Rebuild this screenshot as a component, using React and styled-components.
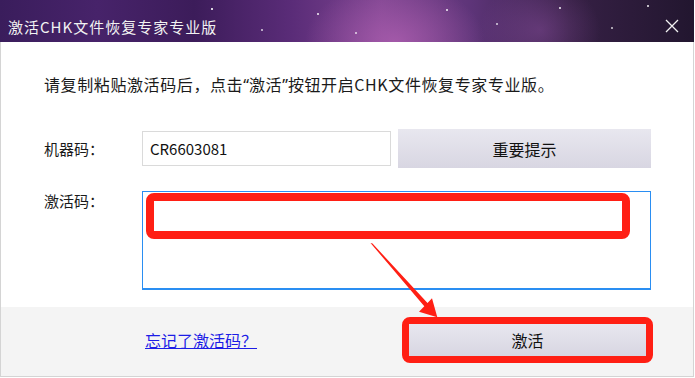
import styled, { createGlobalStyle } from 'styled-components';

const FONT = '"Noto Sans CJK SC", "Noto Sans", sans-serif';
const RED = '#ff1f14';

const GlobalStyle = createGlobalStyle`
  html, body {
    margin: 0;
    padding: 0;
    background: #ffffff;
  }
  * {
    box-sizing: border-box;
  }
`;

export default function App() {
  return (
    <>
      <GlobalStyle />
      <Window>
        <TitleBar>
          <Title>激活CHK文件恢复专家专业版</Title>
          <Close viewBox="0 0 14 14">
            <path d="M1 1 L13 13 M13 1 L1 13" stroke="#f2f2f2" strokeWidth="1.3" fill="none" />
          </Close>
        </TitleBar>

        <Body>
          <Hint>
            请复制粘贴激活码后，点击<Quote>“</Quote>激活<Quote>”</Quote>按钮开启CHK文件恢复专家专业版。
          </Hint>

          <Row $align="center" $top={32}>
            <Label>机器码：</Label>
            <CodeInput readOnly defaultValue="CR6603081" />
            <GrayButton $w={253} $h={39} $ml={7}>重要提示</GrayButton>
          </Row>

          <Row $align="flex-start" $top={23}>
            <Label>激活码：</Label>
            <CodeArea>
              <MarkBox />
            </CodeArea>
          </Row>
        </Body>

        <Footer>
          <ForgotLink href="#">忘记了激活码？</ForgotLink>
          <Highlight>
            <GrayButton $w={237} $h={32}>激活</GrayButton>
          </Highlight>
        </Footer>

        <Arrow viewBox="0 0 695 378">
          <polygon
            points="370.5,243 372.5,243.5 427.5,303 432,298.3 437.3,317.3 419,311.7 424.3,306.3"
            fill={RED}
          />
        </Arrow>
      </Window>
    </>
  );
}

const Window = styled.div`
  position: relative;
  display: flex;
  flex-direction: column;
  width: 694px;
  height: 377px;
  border-left: 1px solid #d4d4d4;
  border-right: 1px solid #d4d4d4;
  border-bottom: 1px solid #d4d4d4;
  font-family: ${FONT};
  color: #1a1a1a;
`;

const TitleBar = styled.div`
  display: flex;
  align-items: center;
  justify-content: space-between;
  height: 42px;
  margin-left: -1px;
  margin-right: -1px;
  padding: 12px 15px 0 8px;
  background:
    radial-gradient(circle at 212px 9px, rgba(255,255,255,0.8) 0 0.8px, transparent 1.3px),
    radial-gradient(circle at 262px 30px, rgba(255,255,255,0.6) 0 0.7px, transparent 1.2px),
    radial-gradient(circle at 318px 14px, rgba(255,255,255,0.7) 0 0.8px, transparent 1.3px),
    radial-gradient(circle at 356px 33px, rgba(255,255,255,0.6) 0 0.7px, transparent 1.2px),
    radial-gradient(circle at 447px 10px, rgba(255,255,255,0.7) 0 0.8px, transparent 1.3px),
    radial-gradient(circle at 497px 24px, rgba(255,255,255,0.6) 0 0.7px, transparent 1.2px),
    radial-gradient(circle at 560px 8px, rgba(255,255,255,0.7) 0 0.8px, transparent 1.3px),
    radial-gradient(circle at 612px 28px, rgba(255,255,255,0.6) 0 0.7px, transparent 1.2px),
    radial-gradient(circle at 648px 6px, rgba(255,255,255,0.7) 0 0.8px, transparent 1.3px),
    radial-gradient(ellipse 90px 60px at 395px 42px, rgba(176, 96, 178, 0.75), transparent 100%),
    radial-gradient(ellipse 60px 50px at 540px 30px, rgba(140, 80, 160, 0.45), transparent 100%),
    linear-gradient(90deg, #3a1d5c 0%, #47236a 14%, #3c1c5a 28%, #5a2c78 42%, #7e4590 55%, #5d3478 68%, #362045 82%, #22162f 100%);
`;

const Title = styled.span`
  font-size: 15px;
  line-height: 20px;
  letter-spacing: 1px;
  color: #f2f2f2;
`;

const Close = styled.svg`
  width: 14px;
  height: 14px;
  margin-top: -3px;
`;

const Body = styled.div`
  flex: 1;
  display: flex;
  flex-direction: column;
  padding: 30px 0 0 43px;
  background: #ffffff;
`;

const Hint = styled.p`
  margin: 0;
  font-size: 16px;
  line-height: 24px;
  letter-spacing: 0.6px;
  color: #1a1a1a;
`;

const Quote = styled.span`
  font-family: "Noto Sans", sans-serif;
  letter-spacing: 0;
`;

const Row = styled.div`
  display: flex;
  align-items: ${({ $align }) => $align};
  margin-top: ${({ $top }) => $top}px;
`;

const Label = styled.span`
  width: 98px;
  flex-shrink: 0;
  font-size: 15px;
  line-height: 20px;
  color: #1a1a1a;
`;

const CodeInput = styled.input`
  width: 249px;
  height: 35px;
  padding: 0 7px;
  border: 1px solid #dadada;
  outline: none;
  font-family: ${FONT};
  font-size: 15px;
  color: #111111;
  background: #ffffff;
`;

const GrayButton = styled.div`
  display: flex;
  align-items: center;
  justify-content: center;
  width: ${({ $w }) => $w}px;
  height: ${({ $h }) => $h}px;
  margin-left: ${({ $ml }) => $ml || 0}px;
  background: linear-gradient(180deg, #e8e7ef 0%, #d8d6e2 100%);
  font-size: 16px;
  color: #111111;
  cursor: pointer;
`;

const CodeArea = styled.div`
  position: relative;
  width: 509px;
  height: 99px;
  border: 1px solid #2a8ef2;
  border-bottom-width: 2px;
  background: #ffffff;
`;

const MarkBox = styled.div`
  position: absolute;
  left: 3px;
  top: 1px;
  width: 484px;
  height: 46px;
  border: 8px solid ${RED};
  border-radius: 8px;
`;

const Footer = styled.div`
  display: flex;
  align-items: center;
  height: 69px;
  padding: 0 40px 3px 144px;
  background: #f4f4f4;
`;

const ForgotLink = styled.a`
  font-size: 16px;
  line-height: 22px;
  color: #1c1ce6;
  text-decoration: underline;
`;

const Highlight = styled.div`
  display: flex;
  margin-left: auto;
  border: 7px solid ${RED};
  border-radius: 8px;
`;

const Arrow = styled.svg`
  position: absolute;
  left: -1px;
  top: 0;
  width: 695px;
  height: 378px;
  pointer-events: none;
`;
